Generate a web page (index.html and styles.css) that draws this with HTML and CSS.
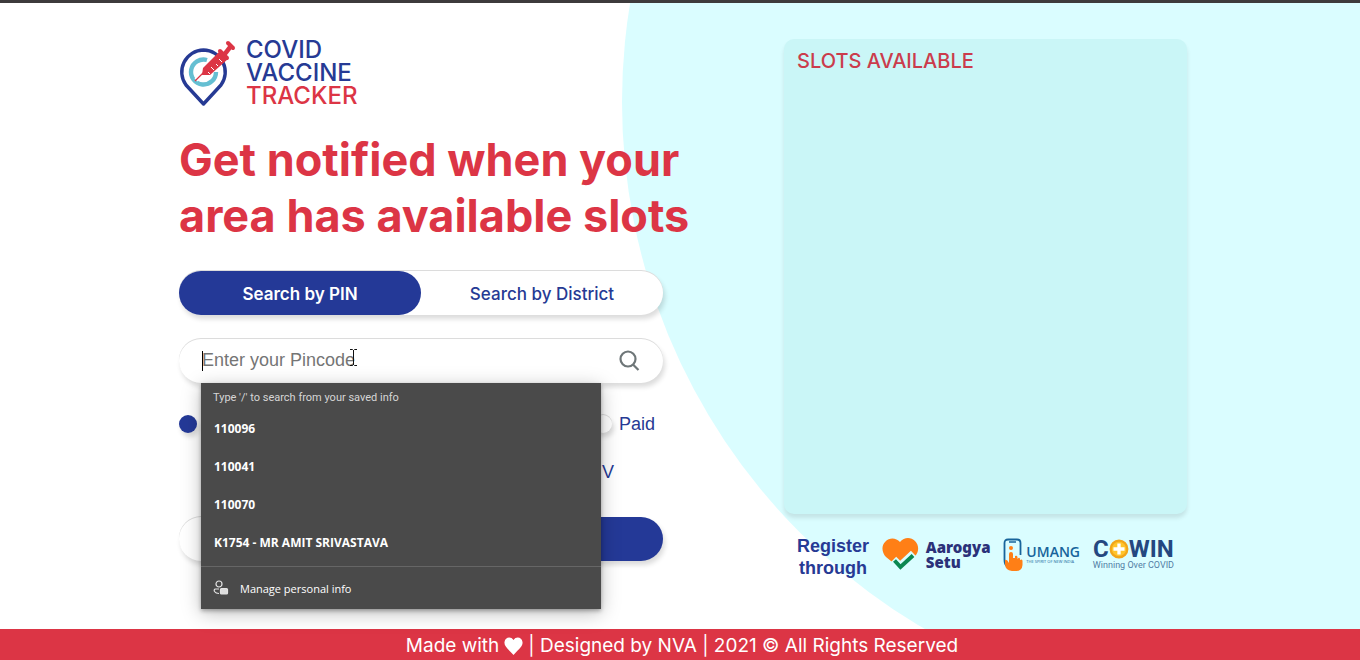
FILE: index.html
```html
<!DOCTYPE html>
<html lang="en">
<head>
<meta charset="utf-8">
<meta name="viewport" content="width=device-width, initial-scale=1">
<title>Covid Vaccine Tracker</title>
<link rel="stylesheet" href="styles.css">
</head>
<body>
<div class="page">
  <div class="circle"></div>
  <main class="content">
    <section class="finder">
      <a class="brand" href="#">
        <svg class="brand-mark" width="58" height="68" viewBox="0 0 58 68" fill="none">
          <path d="M24.500 65 L7 46 A22 22 0 0 1 24.500 11 A22 22 0 0 1 42 46 Z" stroke="#263a94" stroke-width="3.4" stroke-linejoin="round"/>
          <path d="M28 21 A12.500 12.500 0 1 0 37 33" stroke="#65bfd2" stroke-width="4.4"/>
          <path d="M17 41 L26 32" stroke="#fff" stroke-width="4"/>
          <path d="M16 42 L26 32" stroke="#dc3545" stroke-width="1.3"/>
          <path d="M23 36 L24 29 L41 12 L49 20 L31 36 Z" fill="#dc3545"/>
          <path d="M41 12 L48 19" stroke="#dc3545" stroke-width="4" stroke-linecap="round"/>
          <path d="M45 16 L52 7" stroke="#dc3545" stroke-width="4.5"/>
          <path d="M49 4 L54 9" stroke="#dc3545" stroke-width="4" stroke-linecap="round"/>
          <path d="M31 35 l-2 -2 M35 31 l-3 -3 M39 27 l-2 -2 M43 23 l-3 -3" stroke="#fff" stroke-width="1"/>
        </svg>
        <span class="brand-name">COVID<br>VACCINE<br><span class="red">TRACKER</span></span>
      </a>
      <h1>Get notified when your<br>area has available slots</h1>
      <div class="tabs">
        <button class="tab active" type="button">Search by PIN</button>
        <button class="tab" type="button">Search by District</button>
      </div>
      <div class="search">
        <input class="search-input" type="text" placeholder="Enter your Pincode" aria-label="Enter your Pincode">
        <button class="search-button" type="button" aria-label="Search">
          <svg width="22" height="22" viewBox="0 0 22 22" fill="none" stroke="#6e7678" stroke-width="2.2"><circle cx="9" cy="9" r="7.5"/><path d="M14 14.500 L19.500 20"/></svg>
        </button>
        <span class="caret"></span>
        <svg class="pointer" width="9" height="17" viewBox="0 0 9 17" fill="none" stroke="#111" stroke-width="1"><path d="M1 .5H3.5L4.5 1.5L5.5 .5H8M4.5 1V16M1 16.5H3.5L4.5 15.500L5.5 16.500H8"/></svg>
        <div class="suggestions">
          <p class="hint">Type '/' to search from your saved info</p>
          <ul>
            <li>110096</li>
            <li>110041</li>
            <li>110070</li>
            <li>K1754 - MR AMIT SRIVASTAVA</li>
          </ul>
          <a class="manage" href="#">
            <svg width="16" height="16" viewBox="0 0 16 16" fill="none" stroke="#e4e4e4" stroke-width="1.2"><circle cx="6" cy="4" r="3"/><path d="M6 9H2.500C1 9 1 10.500 1.500 11.500C2.500 13 4 13.500 6 13.500"/><rect x="7.500" y="8.500" width="7" height="5.500" rx="1" fill="#ddd"/></svg>
            <span>Manage personal info</span>
          </a>
        </div>
      </div>
      <div class="fees">
        <input class="radio" type="radio" name="fee" aria-label="Free" checked>
        <label class="option"><input class="radio" type="radio" name="fee">Paid</label>
      </div>
      <div class="vaccines">V</div>
      <div class="actions">
        <button class="action" type="button" aria-label="Clear"></button>
        <button class="action primary" type="button" aria-label="Notify me"></button>
      </div>
    </section>
    <aside class="results">
      <div class="slots"><h2>SLOTS AVAILABLE</h2></div>
      <div class="register">
        <span class="register-label">Register through</span>
        <a class="partner setu" href="#">
          <svg width="37" height="34" viewBox="0 0 37 34"><path d="M18 4C22-1 29-1 33 3C37 7 37 13 34 17L19 31L4 19C0 15-1 8 3 4C8-1 14 0 18 4Z" fill="#ff7f16"/><path d="M11 22L18 29L32 16" fill="none" stroke="#dafdff" stroke-width="9"/><path d="M12.500 22.500L18.500 29L31 17.500" fill="none" stroke="#0b8750" stroke-width="4"/></svg>
          <span class="setu-name">Aarogya<br>Setu</span>
        </a>
        <a class="partner umang" href="#">
          <svg width="20" height="34" viewBox="0 0 20 34" fill="none"><path d="M4 28C2 27 1.500 25 1.500 22V5Q1.500 1.500 5 1.500H14Q17.500 1.500 17.500 5V17" stroke="#17649b" stroke-width="1.800"/><path d="M6 4H13" stroke="#17649b" stroke-width="1.500"/><circle cx="8" cy="10" r="2" fill="#ff7f16"/><path d="M6 16Q6 14 8 14Q10 14 10 16V20H12V18Q14 17 14.500 19V21Q16.500 18.500 17 21V22Q19.500 20.500 19.500 23V27Q19 33 13 33H9Q2 32 2 26V22Q4 21 6 25Z" fill="#ff7f16"/></svg>
          <span class="umang-text"><span class="umang-name">UMANG</span><span class="umang-tag">THE SPIRIT OF NEW INDIA</span></span>
        </a>
        <a class="partner cowin" href="#">
          <span class="cowin-name">C<svg width="20" height="20" viewBox="0 0 18 18"><circle cx="9" cy="9" r="7.500" fill="#ffc42b" stroke="#f2a51a" stroke-width="2"/><path d="M9 4V14M4 9H14" stroke="#fff" stroke-width="3"/></svg>WIN</span>
          <span class="cowin-tag">Winning Over COVID</span>
        </a>
      </div>
    </aside>
  </main>
  <footer class="footer">
    <span>Made with</span>
    <svg width="19" height="18" viewBox="0 0 19 18" fill="#fff"><path d="M9.500 3C12-1 18 0 18.500 5C19 9 16 11 9.500 18C3 11 0 9 .5 5C1 0 7-1 9.500 3Z"/></svg>
    <span>| Designed by NVA | 2021 © All Rights Reserved</span>
  </footer>
</div>
</body>
</html>
```
FILE: styles.css
```css
* {
  box-sizing: border-box;
}

body {
  margin: 0;
  font-family: "Liberation Sans", Arial, sans-serif;
  color: #263a94;
  background: #fff;
}

a {
  color: inherit;
  text-decoration: none;
}

button {
  font: inherit;
  color: inherit;
  border: 0;
  cursor: pointer;
}

.page {
  position: relative;
  display: flex;
  flex-direction: column;
  min-height: 100vh;
  overflow: hidden;
  border-top: 3px solid #3d3b3c;
}

.circle {
  position: absolute;
  top: -511px;
  right: -482px;
  width: 1220px;
  height: 1220px;
  border-radius: 50%;
  background: #dafdff;
}

.content {
  position: relative;
  flex: 1;
  display: grid;
  grid-template-columns: 484px 403px;
  justify-content: space-between;
  width: 100%;
  max-width: 1014px;
  margin: 0 auto;
  padding: 36px 0 0 6px;
}

.brand {
  display: flex;
  align-items: center;
  gap: 9px;
  height: 68px;
}

.brand-name {
  padding-bottom: 2px;
  font-family: Inter, sans-serif;
  font-size: 24px;
  line-height: 23px;
  font-weight: 500;
}

.red {
  color: #dc3545;
}

h1 {
  margin: 25px 0 27px;
  font-family: Inter, sans-serif;
  font-size: 45px;
  line-height: 56px;
  font-weight: 700;
  color: #dc3545;
  white-space: nowrap;
}

.tabs {
  display: flex;
  border-radius: 22px;
  background: #fff;
  box-shadow: 0 -1px 0 #dcdcdc, 2px 4px 5px rgba(0, 0, 0, 0.14);
}

.tab {
  flex: 1;
  height: 44px;
  padding: 2px 0 0;
  border-radius: 22px;
  background: transparent;
  font-family: Inter, sans-serif;
  font-size: 17px;
  font-weight: 500;
}

.tab.active {
  background: #243997;
  color: #fff;
  font-weight: 600;
}

.search {
  position: relative;
  display: flex;
  align-items: center;
  height: 44px;
  margin-top: 24px;
  padding: 0 22px 0 23px;
  border-radius: 22px;
  background: #fff;
  box-shadow: 0 -1px 0 #dcdcdc, 2px 4px 5px rgba(0, 0, 0, 0.14);
}

.search-input {
  flex: 1;
  min-width: 0;
  padding: 0 0 2px;
  border: 0;
  outline: 0;
  background: transparent;
  font: 18px "Liberation Sans", Arial, sans-serif;
}

.search-input::placeholder {
  color: #757575;
}

.search-button {
  display: flex;
  padding: 0;
  background: transparent;
}

.caret {
  position: absolute;
  left: 23px;
  top: 12px;
  width: 1px;
  height: 20px;
  background: #000;
}

.pointer {
  position: absolute;
  left: 170px;
  top: 10px;
}

.suggestions {
  position: absolute;
  z-index: 2;
  left: 22px;
  top: 44px;
  width: 400px;
  background: #4a4a4a;
  color: #fff;
  font-family: "Open Sans", "Noto Sans", sans-serif;
  font-size: 12px;
  box-shadow: 0 4px 18px rgba(0, 0, 0, 0.26), 0 2px 4px rgba(0, 0, 0, 0.3);
}

.hint {
  margin: 0;
  padding: 5px 12px 2px;
  font-family: Roboto, sans-serif;
  font-size: 11px;
  line-height: 20px;
  color: #d6d6d6;
}

.suggestions ul {
  margin: 0;
  padding: 0 13px;
  list-style: none;
  font-weight: 700;
}

.suggestions li {
  line-height: 38px;
}

.manage {
  display: flex;
  align-items: center;
  gap: 11px;
  height: 43px;
  margin-top: 4px;
  padding: 0 12px;
  border-top: 1px solid #666;
  font-size: 11px;
}

.fees {
  display: flex;
  justify-content: space-between;
  align-items: center;
  height: 20px;
  margin-top: 31px;
  padding-right: 8px;
}

.option {
  display: flex;
  align-items: center;
  gap: 7px;
  font-size: 18px;
}

.radio {
  appearance: none;
  width: 18px;
  height: 18px;
  margin: 0;
  border-radius: 50%;
  background: #fff;
  box-shadow: 0 -1px 0 #dcdcdc, 2px 4px 5px rgba(0, 0, 0, 0.14);
}

.radio:checked {
  background: #243997;
  box-shadow: 2px 4px 5px rgba(0, 0, 0, 0.14);
}

.vaccines {
  margin-top: 28px;
  padding-right: 49px;
  font-size: 18px;
  line-height: 20px;
  text-align: right;
}

.actions {
  display: flex;
  justify-content: space-between;
  margin-top: 35px;
}

.action {
  width: 232px;
  height: 44px;
  border-radius: 22px;
  background: #fff;
  box-shadow: 0 -1px 0 #dcdcdc, 2px 4px 5px rgba(0, 0, 0, 0.14);
}

.action.primary {
  background: #243997;
  box-shadow: 2px 4px 5px rgba(0, 0, 0, 0.14);
}

.slots {
  height: 475px;
  padding: 10px 13px;
  border-radius: 10px;
  background: #caf6f7;
  box-shadow: 0 4px 4px rgba(0, 0, 0, 0.1);
}

h2 {
  margin: 0;
  font-family: Inter, sans-serif;
  font-size: 20px;
  line-height: 24px;
  font-weight: 500;
  color: #cb3c4c;
}

.register {
  display: flex;
  align-items: center;
  justify-content: space-between;
  margin-top: 21px;
  padding: 0 13px;
}

.register-label {
  width: 72px;
  font-size: 18px;
  line-height: 22px;
  font-weight: 700;
  text-align: center;
}

.partner {
  display: flex;
  align-items: center;
  margin-bottom: 5px;
}

.setu {
  gap: 7px;
}

.setu-name {
  font-family: "Noto Sans", sans-serif;
  font-size: 15px;
  line-height: 15px;
  font-weight: 900;
  color: #2b3179;
}

.umang {
  gap: 3px;
}

.umang-text {
  display: flex;
  flex-direction: column;
}

.umang-name {
  font: 600 14px/15px "Open Sans", sans-serif;
  color: #17649b;
}

.umang-tag {
  font: 4px/6px "Open Sans", sans-serif;
  color: #17649b;
}

.cowin {
  flex-direction: column;
}

.cowin-name {
  display: flex;
  align-items: center;
  font: 700 24px/22px Roboto, sans-serif;
  color: #24477f;
}

.cowin-tag {
  font: 9px/11px Roboto, sans-serif;
  color: #527da5;
}

.footer {
  position: relative;
  display: flex;
  align-items: center;
  justify-content: center;
  gap: 5px;
  height: 31px;
  padding: 2px 0 0 4px;
  background: #dc3545;
  color: #fff;
  font-family: Inter, sans-serif;
  font-size: 19px;
}
```
